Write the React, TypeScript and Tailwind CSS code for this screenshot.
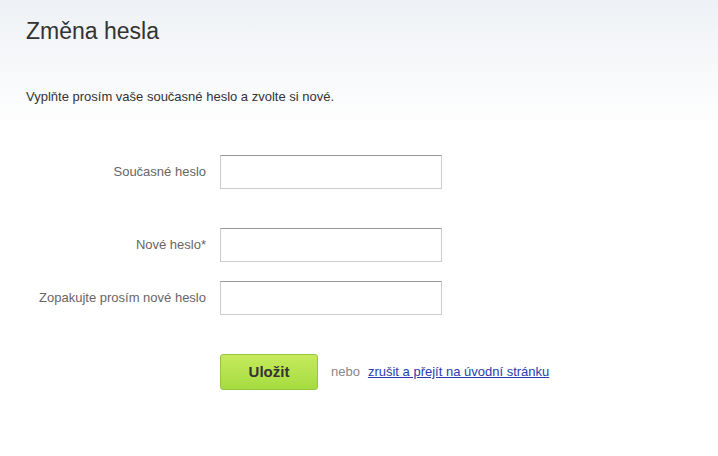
export default function App() {
	const labelClass =
		"w-[220px] shrink-0 pr-[14px] text-right text-[13px] text-[#666]";
	const inputClass =
		"w-[222px] h-[34px] bg-white border border-[#ccc] border-t-[#999] outline-none";

	return (
		<div
			className="w-[718px] h-[456px] bg-gradient-to-b from-[#eef1f5] to-white to-[130px] text-[#333]"
			style={{ fontFamily: '"Liberation Sans", Arial, sans-serif' }}
		>
			<div className="pl-[26px] pt-[17px]">
				<h1 className="text-[23px] leading-[28px]">Změna hesla</h1>
				<p className="mt-[44px] text-[13px] leading-[16px]">
					Vyplňte prosím vaše současné heslo a zvolte si nové.
				</p>
			</div>

			<form className="mt-[50px] flex flex-col">
				<div className="flex items-center">
					<label className={labelClass}>Současné heslo</label>
					<input type="password" className={inputClass} />
				</div>
				<div className="mt-[39px] flex items-center">
					<label className={labelClass}>Nové heslo*</label>
					<input type="password" className={inputClass} />
				</div>
				<div className="mt-[19px] flex items-center">
					<label className={labelClass}>Zopakujte prosím nové heslo</label>
					<input type="password" className={inputClass} />
				</div>

				<div className="mt-[39px] ml-[220px] flex items-center">
					<button
						type="button"
						className="w-[98px] h-[36px] rounded-[3px] border border-[#97c63c] bg-gradient-to-b from-[#c6ea5c] to-[#a5dc3f] text-[15px] font-bold text-[#333]"
					>
						Uložit
					</button>
					<span className="ml-[13px] text-[13px] text-[#888]">nebo</span>
					<a
						href="#"
						className="ml-[8px] text-[13px] text-[#2a3bb0] underline"
					>
						zrušit a přejít na úvodní stránku
					</a>
				</div>
			</form>
		</div>
	);
}
